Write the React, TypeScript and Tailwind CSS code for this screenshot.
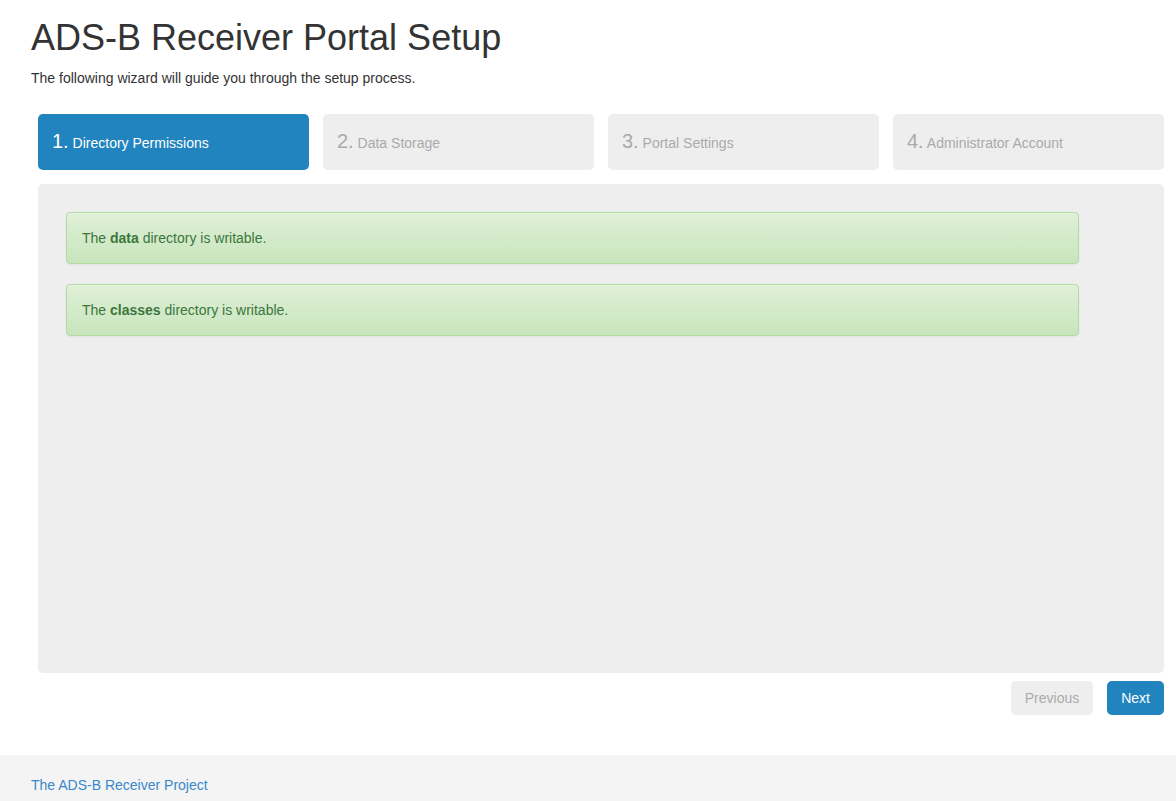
export default function App() {
  const steps = [
    { n: "1.", label: "Directory Permissions", active: true },
    { n: "2.", label: "Data Storage", active: false },
    { n: "3.", label: "Portal Settings", active: false },
    { n: "4.", label: "Administrator Account", active: false },
  ]

  return (
    <div className="min-h-[801px] bg-white text-[14px] leading-[20px] text-[#333] font-['Liberation_Sans',Arial,sans-serif]">
      <div className="ml-[31px] w-[1140px]">
        <h1 className="pt-[18px] mb-[10px] text-[36px] leading-[1.1] font-medium">ADS-B Receiver Portal Setup</h1>
        <p className="mb-[10px]">The following wizard will guide you through the setup process.</p>

        {/* Wizard steps */}
        <ul className="flex mt-[26px]">
          {steps.map((s) => (
            <li key={s.n} className="w-1/4 px-[7px] mb-[7px]">
              <div
                className={`h-[56px] px-[14px] flex items-center rounded-[5px] leading-[28px] ${
                  s.active ? "bg-[#2184be] text-white" : "bg-[#eee] text-[#aaa]"
                }`}
              >
                <span>
                  <span className="text-[20px]">{s.n}</span> {s.label}
                </span>
              </div>
            </li>
          ))}
        </ul>

        {/* Content */}
        <div className="mx-[7px] mt-[7px] h-[489px] bg-[#eee] rounded-[5px] p-[28px]">
          <div className="w-[1013px] mb-[20px] p-[15px] border border-[#b2dba1] rounded-[4px] bg-gradient-to-b from-[#dff0d8] to-[#c8e5bc] text-[#3c763d] shadow-[inset_0_1px_0_rgba(255,255,255,0.25),0_1px_2px_rgba(0,0,0,0.05)]">
            The <b>data</b> directory is writable.
          </div>
          <div className="w-[1013px] mb-[20px] p-[15px] border border-[#b2dba1] rounded-[4px] bg-gradient-to-b from-[#dff0d8] to-[#c8e5bc] text-[#3c763d] shadow-[inset_0_1px_0_rgba(255,255,255,0.25),0_1px_2px_rgba(0,0,0,0.05)]">
            The <b>classes</b> directory is writable.
          </div>
        </div>

        {/* Actions */}
        <div className="flex justify-end gap-[14px] mt-[8px] mr-[7px]">
          <button className="px-[14px] py-[7px] rounded-[5px] bg-[#eee] text-[#aaa]">Previous</button>
          <button className="px-[14px] py-[7px] rounded-[5px] bg-[#2184be] text-white">Next</button>
        </div>
      </div>

      <footer className="mt-[40px] h-[60px] bg-[#f4f4f4] pt-[20px] pl-[31px]">
        <a className="text-[#3a87cc]">The ADS-B Receiver Project</a>
      </footer>
    </div>
  )
}
